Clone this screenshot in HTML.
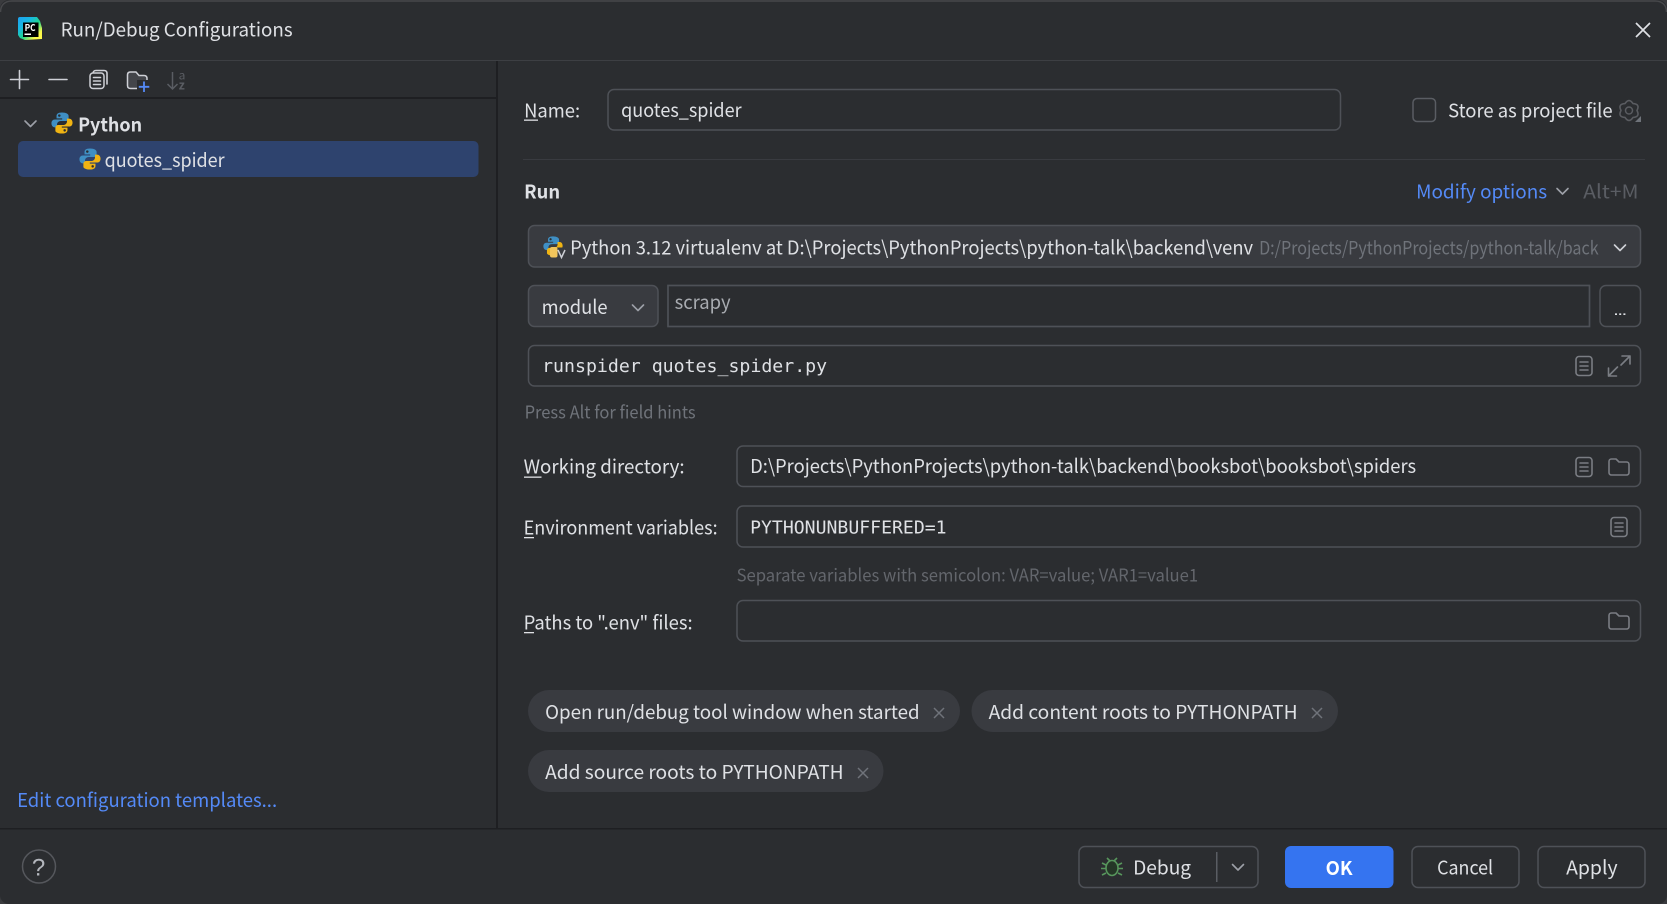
<!DOCTYPE html>
<html><head><meta charset="utf-8"><title>Run/Debug Configurations</title>
<style>
html,body{margin:0;padding:0;background:#3a3b3e;overflow:hidden}
svg{display:block}
text{font-family:"Noto Sans CJK SC","Liberation Sans",sans-serif;font-size:19px;fill:#dfe1e5;transform:translate(-.4px,.7px)}
.m{font-family:"DejaVu Sans Mono","Liberation Mono",monospace;font-size:17.5px}
.b{font-weight:700}
.g{fill:#6f737a}
.l{fill:#548af7}
.f{fill:#2b2d30;stroke:#4e5157;stroke-width:1.5}
.c{fill:#393b40;stroke:#4e5157;stroke-width:1.5}
.i{fill:none;stroke:#7a7d83;stroke-width:1.6;stroke-linecap:round;stroke-linejoin:round}
.w{fill:none;stroke:#ced0d6;stroke-width:1.6;stroke-linecap:round;stroke-linejoin:round}
</style></head><body>
<svg width="1667" height="904" viewBox="0 0 1667 904" xmlns="http://www.w3.org/2000/svg">
<defs>
<linearGradient id="pc" x1="0" y1="0" x2="1" y2="1"><stop offset="0" stop-color="#1ea0f0"/><stop offset=".3" stop-color="#18b8e0"/><stop offset=".55" stop-color="#21d789"/><stop offset=".8" stop-color="#fcf84a"/><stop offset="1" stop-color="#fcf84a"/></linearGradient>
<symbol id="py" viewBox="0 0 24 24">
<path fill="#3f8fc4" d="M12 1C7.5 1 6.3 2.7 6.3 4.7V7.2h5.9v1.1H4.6C2.3 8.3 1 10 1 12.3s1.3 4.3 3.600 4.300h2.200v-3c0-2.100 1.800-3.700 3.900-3.700h5.200c1.700 0 3-1.300 3-3V4.700C19 2.700 16.500 1 12 1z"/>
<path fill="#f0b413" d="M12 23c4.500 0 5.700-1.700 5.700-3.700V16.800h-5.900v-1.100h7.600c2.300 0 3.600-1.700 3.600-4s-1.300-4.300-3.600-4.300h-2.200v3c0 2.100-1.800 3.700-3.900 3.700H8.100c-1.700 0-3 1.300-3 3v3.200C5.100 21.300 7.500 23 12 23z"/>
<circle cx="9.200" cy="4.300" r="1.300" fill="#2b2d30"/><circle cx="14.800" cy="19.700" r="1.300" fill="#2b2d30"/>
</symbol>
<symbol id="doc" viewBox="0 0 18 21">
<rect x="1" y="1" width="16" height="19" rx="3" class="i"/><path class="i" d="M5 6.500h8M5 10.500h8M5 14.500h8"/>
</symbol>
<symbol id="fol" viewBox="0 0 22 18">
<path class="i" d="M1 3.500C1 2 2 1 3.500 1H8l3 3h7.500C20 4 21 5 21 6.500v8C21 16 20 17 18.500 17h-15C2 17 1 16 1 14.500z"/>
</symbol>
<clipPath id="grey"><rect x="1255" y="225" width="344" height="42"/></clipPath>
</defs>

<!-- window -->
<rect x="0" y="0" width="1667" height="904" rx="9" fill="#2b2d30"/>
<path d="M0.500 12C0.500 5 5 1 12 1H1655c7 0 11.500 4 11.500 11" fill="none" stroke="#47484b" stroke-width="1.500"/>
<rect x="0" y="60" width="1667" height="1" fill="#3d3f43"/>
<rect x="0" y="97" width="497" height="2" fill="#1e1f22"/>
<rect x="496" y="61" width="2" height="767" fill="#1e1f22"/>
<rect x="0" y="828" width="1667" height="1.500" fill="#1e1f22"/>

<!-- title -->
<path d="M18 19q0-2 2-2H37l3 4 2 7v11l-17 1-5-2-2-3z" fill="url(#pc)"/>
<rect x="23" y="22.500" width="15.500" height="14.500" fill="#000"/>
<text x="25" y="30.500" textLength="11" lengthAdjust="spacingAndGlyphs" style="font-size:9.500px;font-weight:700;fill:#fff">PC</text>
<rect x="24.500" y="33.500" width="6.500" height="1.500" fill="#fff"/>
<text x="61" y="36" textLength="232" lengthAdjust="spacingAndGlyphs">Run/Debug Configurations</text>
<path d="M1636 23l14 14M1650 23l-14 14" stroke="#dfe1e5" stroke-width="1.700" fill="none"/>

<!-- toolbar -->
<path class="w" d="M19.500 70.500v18M10.500 79.500h18M49 79.500h18"/>
<path class="w" d="M93 73.500c0-1.500 1-3 3-3h8c2 0 3 1 3 3v10.500"/>
<rect x="90" y="73" width="14" height="15.500" rx="3" fill="#2b2d30" stroke="#ced0d6" stroke-width="1.500"/>
<path class="w" d="M93.500 77.500h7M93.500 81h7M93.500 84.500h7"/>
<path d="M127.500 75c0-2 1-3 3-3h5.500l3 3.500h5c2 0 3 1 3 3v10h-16.500c-2 0-3-1-3-3z" fill="#43454a" stroke="#ced0d6" stroke-width="1.500"/>
<rect x="137" y="80" width="14" height="13" fill="#2b2d30"/>
<path d="M144 81.500v10.500M138.800 86.800h10.500" stroke="#548af7" stroke-width="1.800" fill="none"/>
<path d="M172.500 72v16.500M167.500 84l5 5 5-5" fill="none" stroke="#5a5d63" stroke-width="1.500"/>
<text x="179" y="79" style="font-size:12px;fill:#5a5d63">a</text>
<text x="179" y="89" style="font-size:12px;fill:#5a5d63;font-weight:700">z</text>

<!-- tree -->
<path class="i" d="M25 121l5.500 5.500 5.500-5.500" style="stroke:#9da0a8"/>
<use href="#py" x="50.500" y="111.500" width="23" height="23"/>
<text x="78.500" y="131" textLength="64" lengthAdjust="spacingAndGlyphs" class="b">Python</text>
<rect x="18" y="141" width="460.500" height="36" rx="5" fill="#2e436e"/>
<use href="#py" x="78.500" y="147.500" width="23" height="23"/>
<text x="105" y="166.500" textLength="120" lengthAdjust="spacingAndGlyphs">quotes_spider</text>
<text x="17.500" y="806.500" textLength="260" lengthAdjust="spacingAndGlyphs" class="l">Edit configuration templates...</text>

<!-- name -->
<text x="524.500" y="117" textLength="56" lengthAdjust="spacingAndGlyphs">Name:</text>
<rect x="524" y="119.500" width="14" height="1.300" fill="#dfe1e5"/>
<rect x="608" y="89.500" width="732.500" height="40.500" rx="6" class="f"/>
<text x="621.500" y="116.500" textLength="120.500" lengthAdjust="spacingAndGlyphs">quotes_spider</text>
<rect x="1413" y="98.500" width="22.500" height="23" rx="4" fill="#2b2d30" stroke="#5a5d63" stroke-width="1.500"/>
<text x="1448.500" y="117" textLength="164.500" lengthAdjust="spacingAndGlyphs">Store as project file</text>
<path d="M1625 103.600Q1629 97.500 1633 103.600Q1640.300 104 1637 110.500Q1640.300 117 1633 117.400Q1629 123.500 1625 117.400Q1617.700 117 1621 110.500Q1617.700 104 1625 103.600Z" fill="none" stroke="#5a5c61" stroke-width="1.600" stroke-linejoin="round"/>
<circle cx="1629" cy="110.500" r="3.500" fill="none" stroke="#5a5c61" stroke-width="1.500"/>
<path d="M1641 116v6h-6z" fill="#6f737a"/>
<rect x="523" y="159" width="1122" height="1" fill="#393b40"/>

<!-- run -->
<text x="524.500" y="198" textLength="36" lengthAdjust="spacingAndGlyphs" class="b">Run</text>
<text x="1416.500" y="198" textLength="131" lengthAdjust="spacingAndGlyphs" class="l">Modify options</text>
<path class="w" d="M1557 188.500l5.500 5.500 5.500-5.500" style="stroke:#9da0a8"/>
<text x="1583.500" y="198" textLength="55.500" lengthAdjust="spacingAndGlyphs" style="fill:#5a5d63">Alt+M</text>

<!-- interpreter -->
<rect x="528.500" y="225.500" width="1112" height="41.500" rx="6" class="c"/>
<use href="#py" x="542.500" y="235.500" width="21" height="21"/>
<rect x="557" y="247.500" width="10" height="11" fill="#393b40"/>
<rect x="550" y="247" width="7.500" height="10.500" rx="2" fill="#f2c55c"/>
<path d="M558 250l3.500 7.500 3.500-7.500" fill="none" stroke="#ced0d6" stroke-width="1.500"/>
<text x="570.500" y="254" textLength="683" lengthAdjust="spacingAndGlyphs">Python 3.12 virtualenv at D:\Projects\PythonProjects\python-talk\backend\venv</text>
<g clip-path="url(#grey)"><text x="1259.500" y="254" style="font-size:18.500px" textLength="339.500" lengthAdjust="spacingAndGlyphs" class="g">D:/Projects/PythonProjects/python-talk/back</text></g>
<path class="w" d="M1614.500 245l5.500 5.500 5.500-5.500"/>

<!-- module row -->
<rect x="528.500" y="285.500" width="129.500" height="41" rx="6" class="c"/>
<text x="542" y="313.500" textLength="66" lengthAdjust="spacingAndGlyphs">module</text>
<path class="w" d="M632.500 305l5.500 5.500 5.500-5.500" style="stroke:#9da0a8"/>
<rect x="668" y="285.500" width="921.500" height="41" fill="#2b2d30" stroke="#4e5157" stroke-width="1.700"/>
<text x="675" y="308.500" textLength="56" lengthAdjust="spacingAndGlyphs" style="fill:#a8abb0">scrapy</text>
<rect x="1600" y="285.500" width="40.500" height="41" rx="6" class="f"/>
<path d="M1615 314.200h2M1619.200 314.200h2M1623.400 314.200h2" stroke="#dfe1e5" stroke-width="1.600"/>

<!-- args -->
<rect x="528.500" y="345.500" width="1112" height="40.500" rx="6" class="f"/>
<text x="542.500" y="371.500" textLength="285" lengthAdjust="spacingAndGlyphs" class="m">runspider quotes_spider.py</text>
<use href="#doc" x="1575" y="355.500" width="18" height="21"/>
<path class="i" d="M1622 356h8v8M1630 356l-9 9M1616.500 376h-8v-8M1608.500 376l9-9"/>
<text x="525" y="418" textLength="171" lengthAdjust="spacingAndGlyphs" style="font-size:17.500px" class="g">Press Alt for field hints</text>

<!-- working dir -->
<text x="524" y="473" textLength="161" lengthAdjust="spacingAndGlyphs">Working directory:</text>
<rect x="524" y="476.500" width="17.500" height="1.300" fill="#dfe1e5"/>
<rect x="737" y="446" width="903.500" height="40.500" rx="6" class="f"/>
<text x="750.500" y="472.500" textLength="666" lengthAdjust="spacingAndGlyphs">D:\Projects\PythonProjects\python-talk\backend\booksbot\booksbot\spiders</text>
<use href="#doc" x="1575" y="456.500" width="18" height="21"/>
<use href="#fol" x="1608" y="458" width="22" height="18"/>

<!-- env -->
<text x="524" y="534" textLength="194" lengthAdjust="spacingAndGlyphs">Environment variables:</text>
<rect x="524" y="537" width="10" height="1.300" fill="#dfe1e5"/>
<rect x="737" y="506" width="903.500" height="41" rx="6" class="f"/>
<text x="750.500" y="533" textLength="196.500" lengthAdjust="spacingAndGlyphs" class="m">PYTHONUNBUFFERED=1</text>
<use href="#doc" x="1610" y="516.500" width="18" height="21"/>
<text x="737" y="581" textLength="461.500" lengthAdjust="spacingAndGlyphs" style="font-size:17.500px;fill:#63666c">Separate variables with semicolon: VAR=value; VAR1=value1</text>

<!-- paths -->
<text x="524" y="629" textLength="169" lengthAdjust="spacingAndGlyphs">Paths to ".env" files:</text>
<rect x="524" y="632" width="10" height="1.300" fill="#dfe1e5"/>
<rect x="737" y="600.500" width="903.500" height="40.500" rx="6" class="f"/>
<use href="#fol" x="1608" y="612" width="22" height="18"/>

<!-- chips -->
<rect x="528" y="690" width="432" height="42" rx="21" fill="#393b40"/>
<text x="545.500" y="718.500" textLength="374.500" lengthAdjust="spacingAndGlyphs">Open run/debug tool window when started</text>
<path d="M934 708l10 10M944 708l-10 10" stroke="#6f737a" stroke-width="1.500"/>
<rect x="971.500" y="690" width="366.500" height="42" rx="21" fill="#393b40"/>
<text x="989" y="718.500" textLength="309" lengthAdjust="spacingAndGlyphs">Add content roots to PYTHONPATH</text>
<path d="M1312 708l10 10M1322 708l-10 10" stroke="#6f737a" stroke-width="1.500"/>
<rect x="528" y="750" width="355.500" height="42" rx="21" fill="#393b40"/>
<text x="545.500" y="778.500" textLength="298.500" lengthAdjust="spacingAndGlyphs">Add source roots to PYTHONPATH</text>
<path d="M858 768l10 10M868 768l-10 10" stroke="#6f737a" stroke-width="1.500"/>

<!-- footer -->
<circle cx="39" cy="866.500" r="16.500" fill="none" stroke="#55575c" stroke-width="1.500"/>
<text x="39" y="875" text-anchor="middle" style="font-size:24px;fill:#b4b7bd;font-family:'Liberation Sans',sans-serif">?</text>

<rect x="1079" y="846.500" width="179" height="41" rx="6" class="f"/>
<ellipse cx="1112" cy="868" rx="6" ry="7.500" fill="#253627" stroke="#57965c" stroke-width="1.600"/>
<path d="M1107 858l3 3M1117 858l-3 3M1102 863l4 2M1122 863l-4 2M1101 868.500h5M1123 868.500h-5M1102 875l4-2M1122 875l-4-2" stroke="#57965c" stroke-width="1.600" fill="none"/>
<text x="1133.500" y="874" textLength="58" lengthAdjust="spacingAndGlyphs">Debug</text>
<rect x="1216" y="852" width="1.500" height="30" fill="#5a5d63"/>
<path class="w" d="M1232.500 864.500l5.500 5.500 5.500-5.500" style="stroke:#9da0a8"/>

<rect x="1285" y="846" width="108.500" height="42" rx="6" fill="#3574f0"/>
<text x="1326" y="874.500" textLength="27" lengthAdjust="spacingAndGlyphs" class="b" style="fill:#fff">OK</text>

<rect x="1412" y="846.500" width="107" height="41" rx="6" class="f"/>
<text x="1437.500" y="874" textLength="56" lengthAdjust="spacingAndGlyphs">Cancel</text>
<rect x="1538" y="846.500" width="107" height="41" rx="6" class="f"/>
<text x="1566.500" y="874" textLength="51.500" lengthAdjust="spacingAndGlyphs">Apply</text>
</svg>
</body></html>
